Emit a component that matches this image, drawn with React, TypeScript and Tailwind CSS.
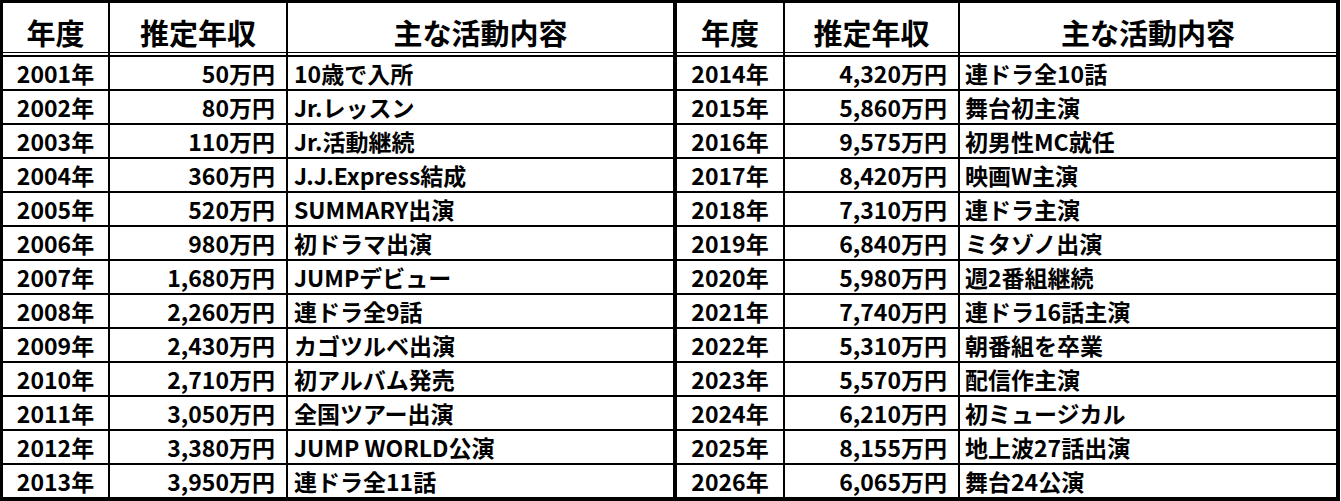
const left = [
  ['2001年', '50万円', '10歳で入所'],
  ['2002年', '80万円', 'Jr.レッスン'],
  ['2003年', '110万円', 'Jr.活動継続'],
  ['2004年', '360万円', 'J.J.Express結成'],
  ['2005年', '520万円', 'SUMMARY出演'],
  ['2006年', '980万円', '初ドラマ出演'],
  ['2007年', '1,680万円', 'JUMPデビュー'],
  ['2008年', '2,260万円', '連ドラ全9話'],
  ['2009年', '2,430万円', 'カゴツルベ出演'],
  ['2010年', '2,710万円', '初アルバム発売'],
  ['2011年', '3,050万円', '全国ツアー出演'],
  ['2012年', '3,380万円', 'JUMP WORLD公演'],
  ['2013年', '3,950万円', '連ドラ全11話'],
];

const right = [
  ['2014年', '4,320万円', '連ドラ全10話'],
  ['2015年', '5,860万円', '舞台初主演'],
  ['2016年', '9,575万円', '初男性MC就任'],
  ['2017年', '8,420万円', '映画W主演'],
  ['2018年', '7,310万円', '連ドラ主演'],
  ['2019年', '6,840万円', 'ミタゾノ出演'],
  ['2020年', '5,980万円', '週2番組継続'],
  ['2021年', '7,740万円', '連ドラ16話主演'],
  ['2022年', '5,310万円', '朝番組を卒業'],
  ['2023年', '5,570万円', '配信作主演'],
  ['2024年', '6,210万円', '初ミュージカル'],
  ['2025年', '8,155万円', '地上波27話出演'],
  ['2026年', '6,065万円', '舞台24公演'],
];

type Side = 'left' | 'right';

function Half({ rows, side }: { rows: string[][]; side: Side }) {
  const isLeft = side === 'left';
  const w1 = isLeft ? 'w-[107px]' : 'w-[108px]';
  const w2 = isLeft ? 'w-[178px]' : 'w-[175px]';
  const w3 = isLeft ? 'w-[385px]' : 'w-[376px]';
  const pad3 = isLeft ? 'pl-[6px]' : 'pl-[5px]';

  return (
    <div className={`flex flex-col ${isLeft ? 'w-[674px] border-r-4 border-black' : 'w-[659px]'}`}>
      {/* header */}
      <div className="flex h-[50px] text-[29px] leading-none">
        <div className={`${w1} shrink-0 border-r-2 border-b border-black flex items-center justify-center pt-[10px]`}>年度</div>
        <div className={`${w2} shrink-0 border-r-2 border-b border-black flex items-center justify-center pt-[10px]`}>推定年収</div>
        <div className={`${w3} shrink-0 border-b border-black flex items-center justify-center pt-[10px]`}>主な活動内容</div>
      </div>
      <div className="flex h-[2px]">
        <div className={`${w1} shrink-0 border-r-2 border-black`} />
        <div className={`${w2} shrink-0 border-r-2 border-black`} />
        <div className={`${w3} shrink-0`} />
      </div>
      {rows.map(([year, income, activity]) => (
        <div key={year} className="flex h-[34px] border-t-2 border-black text-[23px] leading-none">
          <div className={`${w1} shrink-0 border-r-2 border-black flex items-center justify-center`}>{year}</div>
          <div className={`${w2} shrink-0 border-r-2 border-black flex items-center justify-end pr-[11px]`}>{income}</div>
          <div className={`${w3} shrink-0 flex items-center ${pad3}`}>{activity}</div>
        </div>
      ))}
    </div>
  );
}

export default function App() {
  return (
    <div className="w-[1341px] h-[501px] bg-white">
      <div
        className="flex w-[1340px] h-[501px] border-t-[3px] border-l-[3px] border-r-4 border-b-4 border-black bg-white text-black font-bold"
        style={{ fontFamily: '"Noto Sans CJK JP", "Noto Sans", sans-serif' }}
      >
        <Half rows={left} side="left" />
        <Half rows={right} side="right" />
      </div>
    </div>
  );
}
